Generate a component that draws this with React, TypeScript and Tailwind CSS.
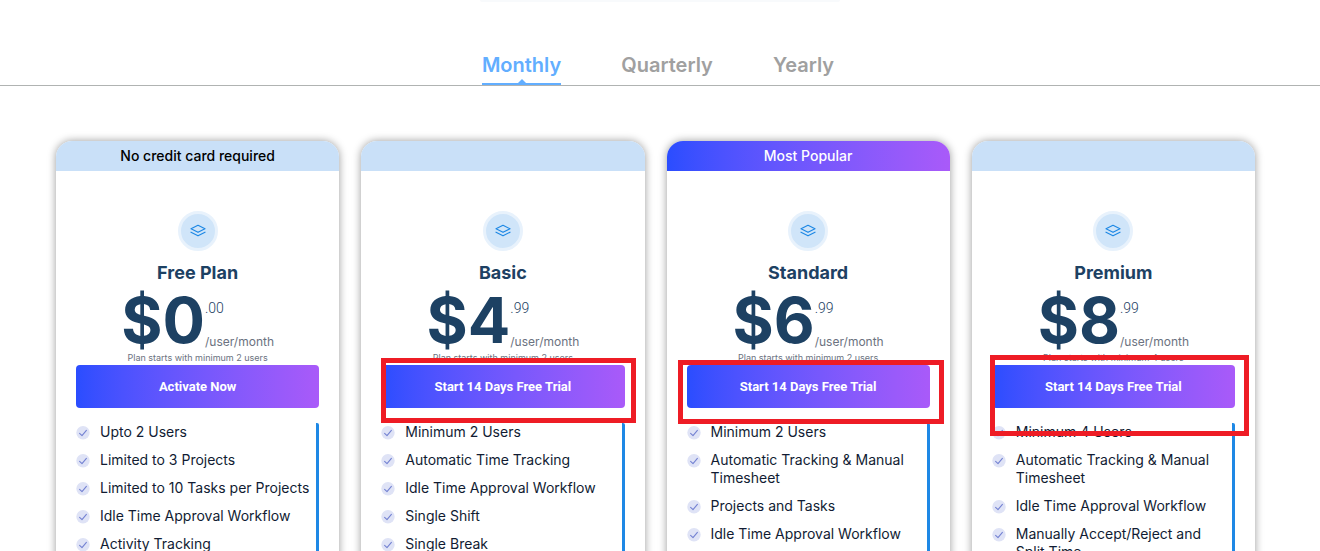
const tabs = ["Monthly", "Quarterly", "Yearly"]

const plans = [
  {
    name: "Free Plan",
    banner: "No credit card required",
    popular: false,
    price: "0",
    cents: ".00",
    note: "Plan starts with minimum 2 users",
    cta: "Activate Now",
    highlight: "",
    features: [
      "Upto 2 Users",
      "Limited to 3 Projects",
      "Limited to 10 Tasks per Projects",
      "Idle Time Approval Workflow",
      "Activity Tracking",
    ],
  },
  {
    name: "Basic",
    banner: "",
    popular: false,
    price: "4",
    cents: ".99",
    note: "Plan starts with minimum 2 users",
    cta: "Start 14 Days Free Trial",
    highlight: "left-0 -right-[11px] -top-[7px] -bottom-[15px]",
    features: [
      "Minimum 2 Users",
      "Automatic Time Tracking",
      "Idle Time Approval Workflow",
      "Single Shift",
      "Single Break",
    ],
  },
  {
    name: "Standard",
    banner: "Most Popular",
    popular: true,
    price: "6",
    cents: ".99",
    note: "Plan starts with minimum 2 users",
    cta: "Start 14 Days Free Trial",
    highlight: "-left-[9px] -right-[14px] -top-[5px] -bottom-[16px]",
    features: [
      "Minimum 2 Users",
      "Automatic Tracking & Manual Timesheet",
      "Projects and Tasks",
      "Idle Time Approval Workflow",
    ],
  },
  {
    name: "Premium",
    banner: "",
    popular: false,
    price: "8",
    cents: ".99",
    note: "Plan starts with minimum 4 users",
    cta: "Start 14 Days Free Trial",
    highlight: "-left-[2px] -right-[14px] -top-[10px] -bottom-[28px]",
    features: [
      "Minimum 4 Users",
      "Automatic Tracking & Manual Timesheet",
      "Idle Time Approval Workflow",
      "Manually Accept/Reject and Split Time",
    ],
  },
]

function LayersIcon() {
  return (
    <svg width="16" height="14" viewBox="0 0 16 14" fill="none" stroke="#1e88e5" strokeWidth="1.2" strokeLinejoin="round" strokeLinecap="round" aria-hidden="true">
      <path d="M8 1.3 15 4.8 8 8.3 1 4.8Z" />
      <path d="M1 8.2 8 11.8l7-3.6" />
    </svg>
  )
}

function CheckIcon() {
  return (
    <svg className="mt-[3px] shrink-0" width="14" height="14" viewBox="0 0 14 14" fill="none" aria-hidden="true">
      <circle cx="7" cy="6.8" r="6.7" fill="#dfe3f6" />
      <path d="M3.6 7.3 6 9.6l4.4-5.2" stroke="#7482d2" strokeWidth="1.1" strokeLinecap="round" strokeLinejoin="round" />
    </svg>
  )
}

function PlanCard({ plan }: { plan: (typeof plans)[number] }) {
  return (
    <article className="flex flex-col rounded-t-2xl bg-white shadow-[0_0_8px_rgba(0,0,0,0.4)]">
      <div
        className={
          plan.popular
            ? "h-[30px] rounded-t-2xl bg-linear-to-r from-[#2a4dff] to-[#a95af9] text-center text-sm leading-[30px] font-medium text-white"
            : "h-[30px] rounded-t-2xl bg-[#c9e0f8] text-center text-sm leading-[30px] font-medium text-black"
        }
      >
        {plan.banner}
      </div>

      <div className="flex flex-1 flex-col px-5 pt-10">
        <div className="mx-auto flex size-10 items-center justify-center rounded-full border-3 border-[#e8f2fc] bg-[#d0e5f9]">
          <LayersIcon />
        </div>
        <h2 className="mt-2 text-center text-lg leading-7 font-bold text-[#1d4163]">{plan.name}</h2>

        <div className="flex h-[66px] justify-center text-[#1d4163]">
          <span className="text-[63px] leading-[66px] font-bold">${plan.price}</span>
          <span className="flex flex-col justify-between pt-[13px] pb-px">
            <span className="font-[Roboto] text-sm leading-4 font-light">{plan.cents}</span>
            <span className="text-xs leading-5 text-[#6b7280]">/user/month</span>
          </span>
        </div>
        <p className="text-center text-[9px] leading-[10px] text-[#6b7280]">{plan.note}</p>

        <div className="relative mt-0.5">
          <button
            type="button"
            className="block h-[43px] w-full rounded bg-linear-to-r from-[#2a4dff] to-[#a95af9] font-[Roboto] text-[13px] font-bold text-white"
          >
            {plan.cta}
          </button>
          {plan.highlight && (
            <span className={`pointer-events-none absolute z-10 border-5 border-[#ee1c25] ${plan.highlight}`} />
          )}
        </div>

        <ul className="mt-[15px] flex flex-1 flex-col gap-[10px] rounded-tr-xs border-r-3 border-[#1e88e5]">
          {plan.features.map((feature) => (
            <li key={feature} className="flex gap-[10px] text-sm leading-[18px] text-[#111c33]">
              <CheckIcon />
              <span>{feature}</span>
            </li>
          ))}
        </ul>
      </div>
    </article>
  )
}

export default function App() {
  return (
    <main className="h-screen overflow-hidden bg-white font-[Inter,sans-serif]">
      {/* Lower edge of the panel above */}
      <div className="mx-auto h-0.5 w-[360px] rounded-b bg-[#f8fafc]" />

      <nav className="mt-[50px] flex justify-center gap-[60px] border-b border-[#b0b3b2] pr-1">
        {tabs.map((tab, index) => (
          <button
            key={tab}
            type="button"
            className={
              index === 0
                ? "relative h-[33px] border-b-2 border-[#62aeff] pb-1.5 text-xl leading-6 font-semibold text-[#62aeff]"
                : "h-[33px] border-b-2 border-transparent pb-1.5 text-xl leading-6 font-semibold text-[#a0a0a0]"
            }
          >
            {tab}
            {index === 0 && (
              <span className="absolute bottom-0 left-1/2 size-0 -translate-x-1/2 border-x-4 border-b-4 border-x-transparent border-b-[#62aeff]" />
            )}
          </button>
        ))}
      </nav>

      <section className="mt-[55px] grid grid-cols-4 gap-[22px] pr-[65px] pl-14">
        {plans.map((plan) => (
          <PlanCard key={plan.name} plan={plan} />
        ))}
      </section>
    </main>
  )
}
